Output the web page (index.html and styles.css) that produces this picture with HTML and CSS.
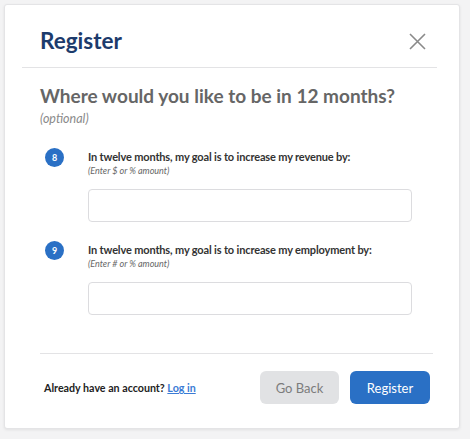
FILE: index.html
```html
<!DOCTYPE html>
<html lang="en">
<head>
    <meta charset="UTF-8">
    <meta name="viewport" content="width=device-width, initial-scale=1.0">
    <title>Register</title>
    <link rel="stylesheet" href="styles.css">
</head>
<body>
    <div class="modal">
        <header class="modal-header">
            <h1>Register</h1>
            <button class="close-btn" aria-label="Close">
                <svg width="17" height="17" viewBox="0 0 17 17">
                    <path d="M1 1 L16 16 M16 1 L1 16" stroke="#8a8a8a" stroke-width="1.6" fill="none"/>
                </svg>
            </button>
        </header>

        <main class="modal-body">
            <h2>Where would you like to be in 12 months?</h2>
            <p class="optional">(optional)</p>

            <!-- Question 8 -->
            <div class="question">
                <span class="badge">8</span>
                <div class="question-fields">
                    <label for="revenue">In twelve months, my goal is to increase my revenue by:</label>
                    <p class="hint">(Enter $ or % amount)</p>
                    <input type="text" id="revenue" name="revenue">
                </div>
            </div>

            <!-- Question 9 -->
            <div class="question">
                <span class="badge">9</span>
                <div class="question-fields">
                    <label for="employment">In twelve months, my goal is to increase my employment by:</label>
                    <p class="hint">(Enter # or % amount)</p>
                    <input type="text" id="employment" name="employment">
                </div>
            </div>
        </main>

        <footer class="modal-footer">
            <p class="login-text">Already have an account? <a href="#">Log in</a></p>
            <div class="actions">
                <button type="button" class="btn btn-back">Go Back</button>
                <button type="submit" class="btn btn-register">Register</button>
            </div>
        </footer>
    </div>
</body>
</html>
```

FILE: styles.css
```css
body {
    margin: 0;
    padding: 4px;
    background: #f3f3f4;
    font-family: Lato, "Open Sans", sans-serif;
}

.modal {
    width: 456px;
    height: 425px;
    background: white;
    border: 1px solid #e4e4e6;
    border-radius: 3px;
    box-shadow: 0 1px 3px rgba(0, 0, 0, 0.08);
    box-sizing: border-box;
}

.modal-header {
    display: flex;
    justify-content: space-between;
    align-items: center;
    margin: 0 22px 0 17px;
    padding: 22px 11px 12px 18px;
    border-bottom: 1px solid #e3e3e5;
}

.modal-header h1 {
    margin: 0;
    font-size: 22.5px;
    line-height: 28px;
    font-weight: 700;
    color: #1c3b6c;
}

.close-btn {
    background: none;
    border: none;
    padding: 0;
    cursor: pointer;
    display: flex;
}

.modal-body {
    padding: 0 35px;
}

.modal-body h2 {
    margin: 15px 0 0;
    font-size: 19px;
    line-height: 26px;
    font-weight: 700;
    color: #666;
}

.optional {
    margin: 2px 0 0;
    font-size: 12.5px;
    line-height: 16px;
    font-style: italic;
    color: #8a8a8a;
}

.question {
    display: flex;
    margin-top: 22px;
}

.question + .question {
    margin-top: 20px;
}

.badge {
    flex: none;
    width: 19px;
    height: 19px;
    margin: -1px 0 0 5px;
    border-radius: 50%;
    background: #2a70c5;
    color: white;
    font-size: 9px;
    font-weight: 700;
    display: flex;
    align-items: center;
    justify-content: center;
}

.question-fields {
    margin-left: 24px;
}

.question-fields label {
    display: block;
    font-size: 11px;
    line-height: 16px;
    font-weight: 700;
    letter-spacing: -0.15px;
    color: #333;
}

.hint {
    margin: 0;
    font-size: 9px;
    line-height: 11px;
    font-style: italic;
    color: #666;
}

.question-fields input {
    display: block;
    width: 324px;
    height: 33px;
    margin-top: 13px;
    border: 1px solid #dcdcdf;
    border-radius: 4px;
    box-sizing: border-box;
}

.modal-footer {
    display: flex;
    justify-content: space-between;
    align-items: center;
    margin: 38px 26px 0 35px;
    padding: 17px 3px 0 4px;
    border-top: 1px solid #e3e3e5;
}

.login-text {
    margin: 0;
    font-size: 10.7px;
    font-weight: 700;
    color: #222;
}

.login-text a {
    color: #3a7bd5;
}

.actions {
    display: flex;
    gap: 11px;
}

.btn {
    height: 33px;
    width: 80px;
    border: none;
    border-radius: 6px;
    font-family: inherit;
    font-size: 13px;
    cursor: pointer;
}

.btn-back {
    background: #e1e2e4;
    color: #7c7c7c;
    width: 79px;
}

.btn-register {
    background: #2a70c5;
    color: white;
}
```
